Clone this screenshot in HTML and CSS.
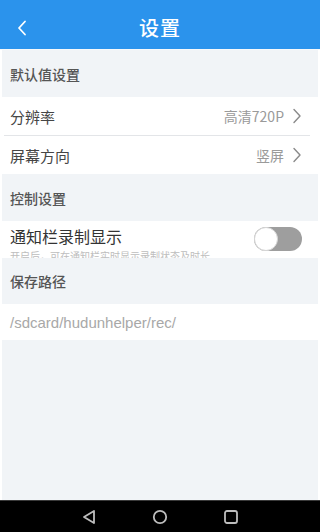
FILE: index.html
```html
<!DOCTYPE html>
<html lang="zh-CN">
<head>
<meta charset="utf-8">
<title>设置</title>
<link rel="stylesheet" href="styles.css">
</head>
<body>
<div class="screen">
  <header class="topbar">
    <span class="back">
      <svg width="12" height="16" viewBox="0 0 12 16"><path d="M9 1.5 L3 8 L9 14.5" fill="none" stroke="#fff" stroke-width="1.8" stroke-linecap="round" stroke-linejoin="round"/></svg>
    </span>
    <h1 class="title">设置</h1>
  </header>
  <main class="content">
    <div class="section sec-default">默认值设置</div>
    <div class="row row-a">
      <span class="label">分辨率</span>
      <span class="value">高清720P</span>
      <svg class="chev" width="10" height="16" viewBox="0 0 10 16"><path d="M2 1.5 L8 8 L2 14.5" fill="none" stroke="#8a8a8a" stroke-width="1.4" stroke-linecap="round" stroke-linejoin="round"/></svg>
    </div>
    <div class="divider"></div>
    <div class="row row-b">
      <span class="label">屏幕方向</span>
      <span class="value">竖屏</span>
      <svg class="chev" width="10" height="16" viewBox="0 0 10 16"><path d="M2 1.5 L8 8 L2 14.5" fill="none" stroke="#8a8a8a" stroke-width="1.4" stroke-linecap="round" stroke-linejoin="round"/></svg>
    </div>
    <div class="section sec-control">控制设置</div>
    <div class="row row-notify">
      <div class="notify-text">
        <span class="label big">通知栏录制显示</span>
        <span class="sub">开启后，可在通知栏实时显示录制状态及时长</span>
      </div>
      <span class="toggle"><span class="knob"></span></span>
    </div>
    <div class="section sec-path">保存路径</div>
    <div class="row row-path">
      <span class="path">/sdcard/hudunhelper/rec/</span>
    </div>
    <div class="filler"></div>
  </main>
  <nav class="navbar">
    <svg width="16" height="16" viewBox="0 0 16 16"><path d="M13 2 L3 8 L13 14 Z" fill="none" stroke="#bdbdbd" stroke-width="1.8" stroke-linejoin="round"/></svg>
    <svg width="16" height="16" viewBox="0 0 16 16"><circle cx="8" cy="8" r="6.2" fill="none" stroke="#bdbdbd" stroke-width="1.8"/></svg>
    <svg width="16" height="16" viewBox="0 0 16 16"><rect x="2" y="2" width="12" height="12" rx="2" fill="none" stroke="#bdbdbd" stroke-width="1.8"/></svg>
  </nav>
</div>
</body>
</html>
```

FILE: styles.css
```css
html, body {
  margin: 0;
  padding: 0;
  background: #ffffff;
}
body {
  font-family: "Noto Sans CJK SC", "Liberation Sans", sans-serif;
}
.screen {
  width: 320px;
  height: 532px;
  display: flex;
  flex-direction: column;
  overflow: hidden;
}
.topbar {
  height: 49px;
  background: #2b93ec;
  display: flex;
  align-items: center;
  justify-content: center;
  position: relative;
  border-bottom: 1px solid #f7f9fb;
}
.back {
  position: absolute;
  left: 16px;
  top: 20px;
  display: flex;
}
.title {
  margin: 0;
  font-size: 20px;
  font-weight: 500;
  color: #ffffff;
  letter-spacing: 1px;
  line-height: 1;
  padding-top: 6px;
}
.content {
  flex: 1;
  display: flex;
  flex-direction: column;
  padding: 0 2px;
  background: #ffffff;
}
.section {
  background: #f1f4f7;
  font-size: 14px;
  color: #555555;
  font-weight: 500;
  display: flex;
  align-items: center;
  padding-left: 8px;
}
.sec-default { height: 47px; }
.sec-control { height: 47px; }
.sec-path { height: 46px; }
.row {
  background: #ffffff;
  display: flex;
  align-items: center;
  padding: 0 16px 0 8px;
}
.row-a { height: 38px; }
.row-b { height: 38px; }
.divider {
  height: 1px;
  background: #e3e5e8;
  margin: 0 8px 0 2px;
}
.label {
  font-size: 15px;
  color: #454545;
  flex: 1;
}
.value {
  font-size: 14px;
  color: #9a9a9a;
  margin-right: 8px;
}
.chev {
  display: block;
}
.row-notify {
  height: 37px;
  overflow: hidden;
  align-items: flex-start;
  padding-right: 16px;
}
.notify-text {
  flex: 1;
  display: flex;
  flex-direction: column;
  padding-top: 4px;
}
.label.big {
  font-size: 16px;
  color: #333333;
  line-height: 22px;
}
.sub {
  font-size: 10px;
  color: #bdbdbd;
  line-height: 12px;
  margin-top: 3px;
  white-space: nowrap;
}
.toggle {
  width: 48px;
  height: 24px;
  border-radius: 12px;
  background: #9e9e9e;
  margin-top: 6px;
  display: flex;
  align-items: center;
}
.knob {
  width: 22px;
  height: 22px;
  border-radius: 50%;
  background: #ffffff;
  border: 1px solid #d6d6d6;
}
.row-path {
  height: 36px;
}
.path {
  font-family: "Liberation Sans", sans-serif;
  font-size: 15px;
  color: #a8a8a8;
}
.filler {
  flex: 1;
  background: #f1f4f7;
}
.navbar {
  height: 32px;
  background: #000000;
  border-top: 1px solid #3a3a3a;
  box-sizing: border-box;
  display: flex;
  align-items: center;
  justify-content: center;
  gap: 55px;
}
```
